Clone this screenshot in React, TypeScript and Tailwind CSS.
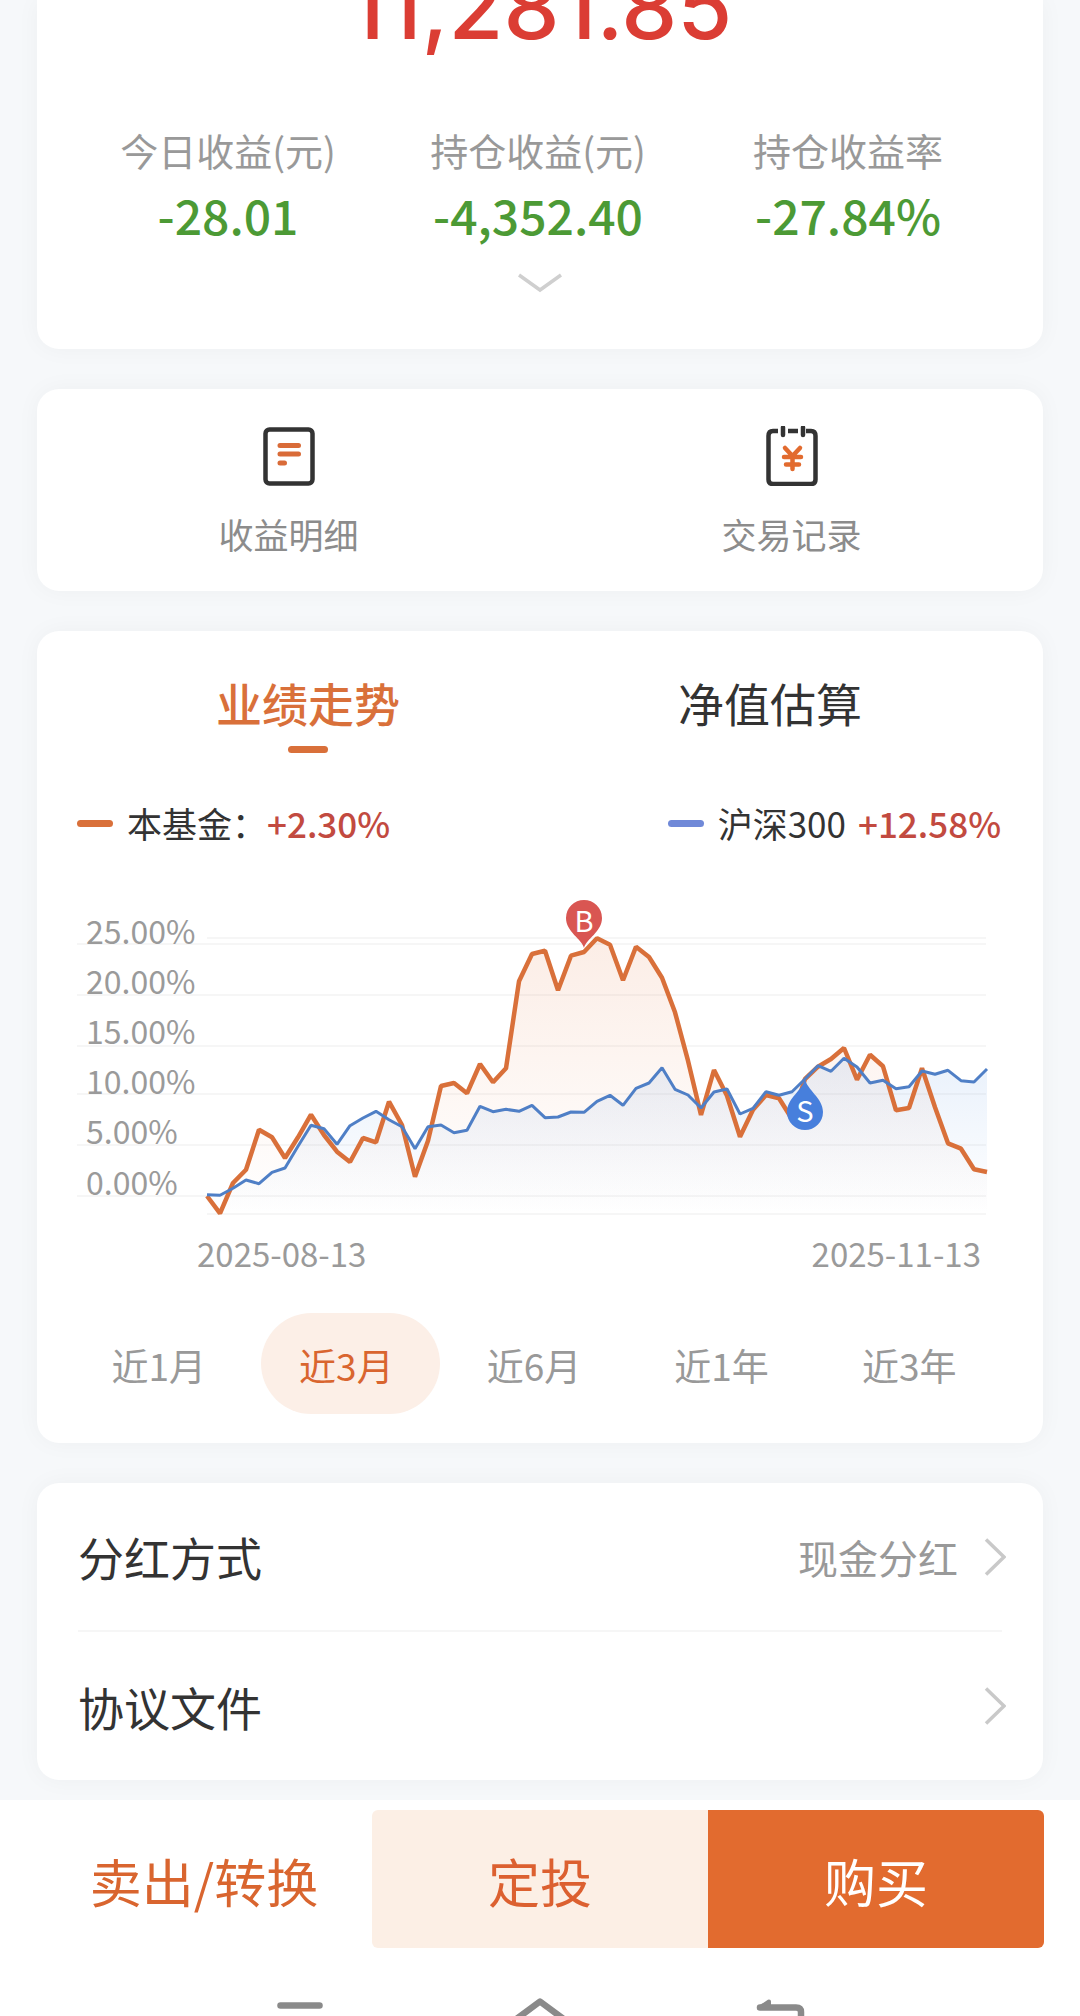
import React from "react";
import clsx from "clsx";

const stats = [
  { label: "今日收益(元)", value: "-28.01" },
  { label: "持仓收益(元)", value: "-4,352.40" },
  { label: "持仓收益率", value: "-27.84%" },
];

const ranges = ["近1月", "近3月", "近6月", "近1年", "近3年"];

// Daily plot positions, measured down from the top of the chart in thirds of a unit
const fund = [
  951, 1003, 912, 872, 752, 775, 837, 775, 707, 768, 818, 849, 777, 790, 668,
  738, 893, 785, 621, 612, 643, 555, 610, 568, 307, 225, 215, 334, 230, 219,
  178, 197, 304, 203, 234, 296, 400, 545, 708, 573, 650, 773, 692, 648, 658,
  720, 600, 563, 540, 507, 602, 527, 562, 694, 687, 568, 685, 793, 809, 871,
  879,
];
const index300 = [
  947, 949, 928, 903, 914, 880, 867, 802, 739, 749, 796, 740, 717, 697, 722,
  743, 809, 743, 738, 761, 754, 682, 698, 691, 697, 679, 716, 714, 699, 700,
  667, 649, 679, 628, 612, 566, 631, 648, 687, 639, 630, 705, 688, 638, 649,
  638, 600, 560, 577, 538, 564, 612, 604, 629, 623, 576, 586, 574, 605, 609,
  570,
];

const axis = [
  { label: "25.00%", text: 65, line: 65 },
  { label: "20.00%", text: 115, line: 116 },
  { label: "15.00%", text: 165, line: 167 },
  { label: "10.00%", text: 215, line: 215 },
  { label: "5.00%", text: 265, line: 266 },
  { label: "0.00%", text: 316, line: 317 },
];

const toPoints = (values: number[]) =>
  values.map((v, i) => `${130 + i * 13},${(v / 3).toFixed(1)}`).join(" ");

const Card: React.FC<{ className?: string; children: React.ReactNode }> = ({
  className,
  children,
}) => (
  <section
    className={clsx("bg-white shadow-[0_0_24px_rgba(40,50,60,0.04)]", className)}
  >
    {children}
  </section>
);

const Chevron: React.FC = () => (
  <svg className="-mr-1 h-10 w-6" viewBox="0 0 24 40" fill="none">
    <path d="M4 2.5 L22 20 L4 37.5" stroke="#c9c9c9" strokeWidth="3.5" />
  </svg>
);

const TrendChart: React.FC = () => (
  <svg
    className="mt-8 w-full"
    viewBox="0 0 924 400"
    fontFamily='"Noto Sans CJK SC", sans-serif'
    role="img"
    aria-label="业绩走势"
  >
    <defs>
      <linearGradient id="fundFill" gradientUnits="userSpaceOnUse" x1="0" y1="59" x2="0" y2="335">
        <stop offset="0" stopColor="#e26b2f" stopOpacity="0.12" />
        <stop offset="1" stopColor="#e26b2f" stopOpacity="0" />
      </linearGradient>
      <linearGradient id="indexFill" gradientUnits="userSpaceOnUse" x1="0" y1="179" x2="0" y2="335">
        <stop offset="0" stopColor="#4a8be0" stopOpacity="0.12" />
        <stop offset="1" stopColor="#4a8be0" stopOpacity="0" />
      </linearGradient>
    </defs>

    {/* Grid */}
    {axis.map((a) => (
      <g key={a.label}>
        <path d={`M0 ${a.line} H909`} stroke="#f6f6f6" strokeWidth="2" />
        <text x="9" y={a.text} fontSize="32" fill="#9a9a9a">
          {a.label}
        </text>
      </g>
    ))}
    <path d="M130 59 H909 M130 335 H909" stroke="#f6f6f6" strokeWidth="2" />

    {/* Series */}
    <polygon points={`130,335 ${toPoints(fund)} 910,335`} fill="url(#fundFill)" />
    <polygon points={`130,335 ${toPoints(index300)} 910,335`} fill="url(#indexFill)" />
    <polyline points={toPoints(fund)} fill="none" stroke="#d9703a" strokeWidth="4.5" strokeLinejoin="bevel" />
    <polyline points={toPoints(index300)} fill="none" stroke="#4f7fc6" strokeWidth="3" strokeLinejoin="bevel" />

    {/* Buy and sell markers */}
    <path d="M507 69 C505 60 489 53 489 39 A18 18 0 0 1 525 39 C525 53 509 60 507 69 Z" fill="#d95652" />
    <text x="507" y="53" fontSize="29" textAnchor="middle" fill="#fff">
      B
    </text>
    <path d="M728 200 C730 211 746 219 746 233 A18 18 0 0 1 710 233 C710 219 726 211 728 200 Z" fill="#477fdc" />
    <text x="728" y="243" fontSize="29" textAnchor="middle" fill="#fff">
      S
    </text>

    <text x="120" y="388" fontSize="33" fill="#9a9a9a">
      2025-08-13
    </text>
    <text x="904" y="388" fontSize="33" textAnchor="end" fill="#9a9a9a">
      2025-11-13
    </text>
  </svg>
);

const App: React.FC = () => {
  return (
    <div className="overflow-hidden bg-[#f6f8fa] font-['Noto_Sans_CJK_SC',sans-serif] text-[#333333]">
      <main className="flex flex-col gap-10 px-[37px] pb-5">
        {/* Holding summary */}
        <Card className="rounded-b-[22px] pb-14">
          <h1 className="-mt-[37px] text-center font-['Inter',sans-serif] text-[89px] leading-[88px] font-medium text-[#db3d34]">
            11,281.85
          </h1>
          <dl className="mt-[71px] grid grid-cols-3 pr-10 pl-9 text-center">
            {stats.map((s) => (
              <div key={s.label}>
                <dt className="text-[38px] leading-[56px] text-[#999999]">
                  {s.label}
                </dt>
                <dd className="mt-1 text-[48px] leading-[64px] font-medium text-[#4c9a35]">
                  {s.value}
                </dd>
              </div>
            ))}
          </dl>
          <button aria-label="展开" className="mx-auto mt-[27px] block">
            <svg className="h-5 w-11" viewBox="0 0 44 20" fill="none">
              <path d="M1 2 L22 17 L43 2" stroke="#cfcfcf" strokeWidth="3.5" />
            </svg>
          </button>
        </Card>

        {/* Shortcuts */}
        <Card className="grid grid-cols-2 rounded-[22px] pt-[37px] pb-[33px] text-[35px] leading-[48px] text-[#8c8c8c]">
          <a href="#income" className="flex flex-col items-center gap-6">
            <svg className="h-15 w-13" viewBox="0 0 52 60" fill="none">
              <rect x="2.5" y="3.5" width="47" height="54" rx="4" stroke="#333" strokeWidth="4.5" />
              <path d="M17 19.5 H35.5 M17 28 H35.5 M17 37 H21.5" stroke="#d96b38" strokeWidth="5" strokeLinecap="round" />
            </svg>
            收益明细
          </a>
          <a href="#records" className="flex flex-col items-center gap-6">
            <svg className="h-15 w-13" viewBox="0 0 52 60" fill="none">
              <path
                d="M12 5 H7 Q2.5 5 2.5 10 V53.5 Q2.5 58 7 58 H45 Q49.5 58 49.5 53.5 V10 Q49.5 5 45 5 H40 M22 5 H32"
                stroke="#333"
                strokeWidth="4.5"
              />
              <path d="M17 1.5 V9 M37 1.5 V9" stroke="#333" strokeWidth="4.5" strokeLinecap="round" />
              <path
                d="M19 22 L26.5 30 L34 22 M18 31 H35 M20 38.5 H33 M26.5 30 V43"
                stroke="#e26b2f"
                strokeWidth="4.5"
                strokeLinecap="round"
              />
            </svg>
            交易记录
          </a>
        </Card>

        {/* Performance */}
        <Card className="rounded-[22px] pt-[41px] pb-[29px]">
          <div className="pr-[42px] pl-10">
            <div role="tablist" className="grid grid-cols-2 text-[46px] leading-[60px]">
              <button role="tab" aria-selected="true" className="flex flex-col items-center gap-[14px] font-medium text-[#d9703a]">
                业绩走势
                <span className="h-[7px] w-10 rounded-full bg-[#d9703a]" />
              </button>
              <button role="tab" aria-selected="false" className="self-start">
                净值估算
              </button>
            </div>
            <div className="mt-[46px] flex justify-between text-[35px] leading-[48px]">
              <div className="flex items-center">
                <span className="mr-[14px] h-[7px] w-9 rounded-full bg-[#d9703a]" />
                本基金：
                <span className="font-medium text-[#c24a40]">+2.30%</span>
              </div>
              <div className="flex items-center">
                <span className="mr-[14px] h-[7px] w-9 rounded-full bg-[#7089d8]" />
                沪深300
                <span className="ml-3 font-medium text-[#c24a40]">+12.58%</span>
              </div>
            </div>
            <TrendChart />
          </div>
          <div className="mt-[34px] grid grid-cols-5 pr-9 pl-8">
            {ranges.map((r) => (
              <button
                key={r}
                className={clsx(
                  "mx-1 h-[101px] rounded-full pt-1 pr-2 text-[37px]",
                  r === "近3月"
                    ? "bg-[#fcefe7] text-[#d9652f]"
                    : "text-[#999999]"
                )}
              >
                {r}
              </button>
            ))}
          </div>
        </Card>

        {/* Settings */}
        <Card className="rounded-[22px] px-[41px] text-[46px]">
          <a href="#dividend" className="flex h-[149px] items-center border-b-2 border-[#f6f6f6]">
            <span className="flex-1">分红方式</span>
            <span className="mr-6 text-[40px] text-[#999999]">现金分红</span>
            <Chevron />
          </a>
          <a href="#agreement" className="flex h-[148px] items-center">
            <span className="flex-1">协议文件</span>
            <Chevron />
          </a>
        </Card>
      </main>

      <footer className="bg-white px-9 pt-[10px]">
        <div className="grid h-[138px] grid-cols-3 text-[52px]">
          <button className="pt-1 text-[#d9652f]">卖出/转换</button>
          <button className="rounded-l-md bg-[#fcefe5] pt-1 text-[#dc6030]">
            定投
          </button>
          <button className="rounded-r-md bg-[#e26b2f] pt-1 text-white">
            购买
          </button>
        </div>
        {/* System navigation */}
        <nav className="mt-[50px] flex justify-center gap-[190px]">
          <button aria-label="最近任务">
            <svg className="h-[18px] w-[50px]" viewBox="0 0 50 18" fill="none">
              <path d="M5.5 7.5 H44.5" stroke="#8a8a8a" strokeWidth="6.5" strokeLinecap="round" />
            </svg>
          </button>
          <button aria-label="主屏幕">
            <svg className="h-[18px] w-[50px]" viewBox="0 0 50 18" fill="none">
              <path d="M0 22 L25 3.5 L50 22" stroke="#8a8a8a" strokeWidth="6.5" strokeLinejoin="round" />
            </svg>
          </button>
          <button aria-label="返回">
            <svg className="h-[18px] w-[50px]" viewBox="0 0 50 18" fill="none">
              <path
                d="M14 3.5 L4 10 L14 10 Z"
                fill="#8a8a8a"
                stroke="#8a8a8a"
                strokeWidth="4"
                strokeLinejoin="round"
              />
              <path d="M5 9.5 H41 Q46 9.5 46 14 V20" stroke="#8a8a8a" strokeWidth="6.5" strokeLinecap="round" />
            </svg>
          </button>
        </nav>
      </footer>
    </div>
  );
};

export default App;
